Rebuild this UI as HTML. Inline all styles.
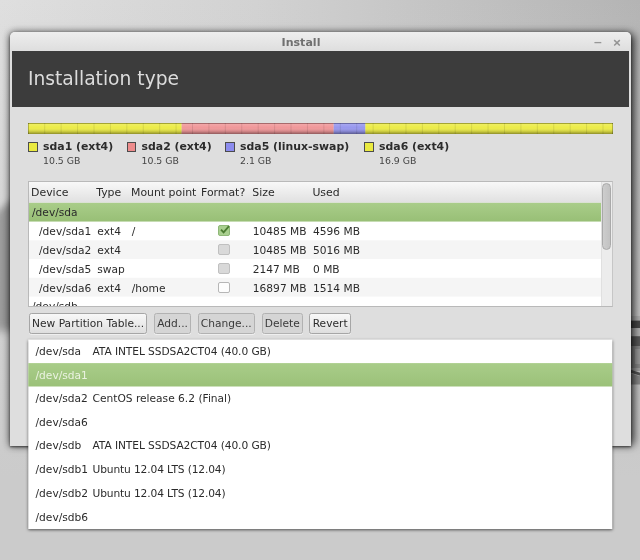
<!DOCTYPE html>
<html>
<head>
<meta charset="utf-8">
<title>Install</title>
<style>
html,body{margin:0;padding:0;}
body{width:640px;height:560px;overflow:hidden;position:relative;
  font-family:"DejaVu Sans","Liberation Sans",sans-serif;font-size:10.65px;color:#3a3a3a;
  background:linear-gradient(to bottom,rgba(203,203,203,0) 0%,rgba(203,203,203,.6) 45%,rgba(203,203,203,1) 85%),linear-gradient(to right,#dfdfdf 0%,#d2d2d2 40%,#b4b4b4 100%);}
.abs{position:absolute;}
#deco{position:absolute;left:0;top:0;width:640px;height:560px;}
#win{filter:blur(.4px);will-change:transform;position:absolute;left:10px;top:32px;width:621px;height:414px;background:#dedede;
  border-radius:5px 5px 0 0;box-shadow:0 1px 2.5px rgba(0,0,0,.55),0 0 6px 1px rgba(0,0,0,.33);}
#wsh{position:absolute;left:12px;top:38px;width:618px;height:403px;box-shadow:1.5px 0 9px 3px rgba(0,0,0,.62);}
#titlebar{position:absolute;left:0;top:0;width:100%;height:19px;border-radius:5px 5px 0 0;
  background:linear-gradient(#eeeeee,#e6e6e6 50%,#dedede);}
#title{position:absolute;left:0;width:582px;top:4px;text-align:center;font-weight:bold;font-size:11.05px;color:#707070;line-height:13px;}
#hdr{position:absolute;left:2px;top:19px;width:617px;height:55.5px;background:#3c3c3c;}
#hdr span{position:absolute;left:15.9px;top:16px;font-size:18.7px;line-height:24px;color:#dcdcdc;white-space:nowrap;}
#bar{position:absolute;left:18px;top:91px;width:585px;height:11px;}
.leg{position:absolute;top:110px;white-space:nowrap;}
.leg i{position:absolute;left:0;top:0;width:7.5px;height:7.5px;border:1px solid #4c4c4c;}
.leg b{position:absolute;left:15px;top:-2px;font-size:10.9px;line-height:14px;color:#2c2c2c;}
.leg s{position:absolute;left:15px;top:12.5px;font-size:9.35px;line-height:12px;color:#444;text-decoration:none;}
#tbl{position:absolute;left:18px;top:149px;width:585px;height:126px;background:#fff;border:1px solid #b9b9b9;border-right-color:#c6c6c6;box-sizing:border-box;overflow:hidden;}
#tbl .h{position:absolute;left:0;top:1px;width:573px;height:20.5px;}
#tbl .row{position:absolute;left:0;width:573px;height:18.75px;}
#tblbg{position:absolute;left:0;top:0;width:572.3px;height:123px;}
#tbl span{position:absolute;top:0;line-height:19px;white-space:nowrap;color:#2b2b2b;}
#tbl .h span{line-height:20px;font-size:10.9px;}
.cb{position:absolute;left:188.6px;top:3px;width:10px;height:8.6px;border:1px solid #b4b4b4;border-radius:2px;box-sizing:content-box;}
#sb{position:absolute;left:572.3px;top:0;width:11.7px;height:124px;background:#ececec;border-left:1px solid #e0e0e0;box-sizing:border-box;}
#sb i{position:absolute;left:0.2px;top:1px;width:6.6px;height:64.5px;border-radius:5px;background:linear-gradient(to right,#cdcdcd,#c2c2c2);border:1px solid #a9a9a9;}
.btn{position:absolute;top:281px;height:20.5px;box-sizing:border-box;border:1px solid #a6a6a6;border-radius:2.5px;
  background:linear-gradient(#f8f8f8,#ececec 50%,#dedede);text-align:center;line-height:20px;color:#2b2b2b;white-space:nowrap;box-shadow:0 1px 0 rgba(255,255,255,.5);}
.btn.d{background:#d5d5d5;border-color:#b2b2b2;color:#3a3a3a;}
#dd{filter:blur(.4px);will-change:transform;position:absolute;left:28px;top:339px;width:585px;height:190px;}
#ddbg{position:absolute;left:-6px;top:-6px;width:597px;height:202px;}
#dd div{position:absolute;left:0;width:100%;height:24px;}
#dd span{position:absolute;top:0;line-height:24px;white-space:nowrap;color:#2b2b2b;}
</style>
</head>
<body>
<svg id="deco" viewBox="0 0 640 560">
  <defs>
    <filter id="bl" x="-50%" y="-20%" width="200%" height="140%"><feGaussianBlur stdDeviation="1.5 4"/></filter>
    <filter id="bl2" x="-20%" y="-5%" width="140%" height="110%"><feGaussianBlur stdDeviation="0.6"/></filter>
    <linearGradient id="lg1" x1="0" x2="1" y1="0" y2="0"><stop offset="0" stop-color="#8c8c8c"/><stop offset="1" stop-color="#6c6c6c"/></linearGradient>
  </defs>
  <path d="M-4 212 L12 200 L12 331 L-4 331Z" fill="url(#lg1)" opacity=".68" filter="url(#bl)"/>
  <g filter="url(#bl2)">
  <rect x="630" y="316" width="11" height="4.6" fill="#b2b2b2"/>
  <rect x="630" y="320.6" width="11" height="7.6" fill="#484848"/>
  <rect x="630" y="328.2" width="11" height="8" fill="#b4b4b4"/>
  <rect x="630" y="336.2" width="11" height="10" fill="#5a5a5a"/>
  <rect x="630" y="346" width="11" height="22" fill="#8a8a8a"/>
  <rect x="635" y="349" width="6" height="15" fill="#9c9c9c"/>
  <rect x="630" y="368" width="11" height="3" fill="#a4a4a4"/>
  <path d="M630 369.5l11 3.5v3l-11 -3.5z" fill="#585858"/>
  <path d="M630 373l11 3.5v8h-11z" fill="#8c8c8c"/>
  </g>
</svg>
<div id="wsh"></div>
<div id="win">
  <div id="titlebar"><div id="title">Install</div>
    <svg class="abs" style="left:580px;top:4px" width="36" height="12" viewBox="0 0 36 12">
      <path d="M4.4 6.6h6.9" stroke="#979797" stroke-width="1.3" fill="none"/>
      <path d="M24.2 4.1l5.6 5.4M29.8 4.1l-5.6 5.4" stroke="#949494" stroke-width="1.5" fill="none"/>
    </svg>
  </div>
  <div id="hdr"><span>Installation type</span></div>
  <svg id="bar" viewBox="0 0 585 11" preserveAspectRatio="none">
    <defs><linearGradient id="sh" x1="0" x2="0" y1="0" y2="1">
      <stop offset="0" stop-color="#000" stop-opacity=".3"/><stop offset=".09" stop-color="#000" stop-opacity=".3"/><stop offset=".1" stop-color="#fff" stop-opacity=".14"/>
      <stop offset=".4" stop-color="#fff" stop-opacity="0"/><stop offset=".8" stop-color="#000" stop-opacity=".17"/><stop offset="1" stop-color="#000" stop-opacity=".4"/></linearGradient></defs>
    <rect x="0" y="0" width="153.7" height="11" fill="#ecec48"/>
    <rect x="153.7" y="0" width="152" height="11" fill="#f0989a"/>
    <rect x="305.7" y="0" width="31.7" height="11" fill="#9898ee"/>
    <rect x="337.4" y="0" width="247.6" height="11" fill="#ecec48"/>
    <rect x="16.22" y="0" width="1" height="11" fill="#000" fill-opacity=".1"/><rect x="32.64" y="0" width="1" height="11" fill="#000" fill-opacity=".1"/><rect x="49.06" y="0" width="1" height="11" fill="#000" fill-opacity=".1"/><rect x="65.48" y="0" width="1" height="11" fill="#000" fill-opacity=".1"/><rect x="81.90" y="0" width="1" height="11" fill="#000" fill-opacity=".1"/><rect x="98.32" y="0" width="1" height="11" fill="#000" fill-opacity=".1"/><rect x="114.74" y="0" width="1" height="11" fill="#000" fill-opacity=".1"/><rect x="131.16" y="0" width="1" height="11" fill="#000" fill-opacity=".1"/><rect x="147.58" y="0" width="1" height="11" fill="#000" fill-opacity=".1"/><rect x="164.00" y="0" width="1" height="11" fill="#000" fill-opacity=".1"/><rect x="180.42" y="0" width="1" height="11" fill="#000" fill-opacity=".1"/><rect x="196.84" y="0" width="1" height="11" fill="#000" fill-opacity=".1"/><rect x="213.26" y="0" width="1" height="11" fill="#000" fill-opacity=".1"/><rect x="229.68" y="0" width="1" height="11" fill="#000" fill-opacity=".1"/><rect x="246.10" y="0" width="1" height="11" fill="#000" fill-opacity=".1"/><rect x="262.52" y="0" width="1" height="11" fill="#000" fill-opacity=".1"/><rect x="278.94" y="0" width="1" height="11" fill="#000" fill-opacity=".1"/><rect x="295.36" y="0" width="1" height="11" fill="#000" fill-opacity=".1"/><rect x="311.78" y="0" width="1" height="11" fill="#000" fill-opacity=".1"/><rect x="328.20" y="0" width="1" height="11" fill="#000" fill-opacity=".1"/><rect x="344.62" y="0" width="1" height="11" fill="#000" fill-opacity=".1"/><rect x="361.04" y="0" width="1" height="11" fill="#000" fill-opacity=".1"/><rect x="377.46" y="0" width="1" height="11" fill="#000" fill-opacity=".1"/><rect x="393.88" y="0" width="1" height="11" fill="#000" fill-opacity=".1"/><rect x="410.30" y="0" width="1" height="11" fill="#000" fill-opacity=".1"/><rect x="426.72" y="0" width="1" height="11" fill="#000" fill-opacity=".1"/><rect x="443.14" y="0" width="1" height="11" fill="#000" fill-opacity=".1"/><rect x="459.56" y="0" width="1" height="11" fill="#000" fill-opacity=".1"/><rect x="475.98" y="0" width="1" height="11" fill="#000" fill-opacity=".1"/><rect x="492.40" y="0" width="1" height="11" fill="#000" fill-opacity=".1"/><rect x="508.82" y="0" width="1" height="11" fill="#000" fill-opacity=".1"/><rect x="525.24" y="0" width="1" height="11" fill="#000" fill-opacity=".1"/><rect x="541.66" y="0" width="1" height="11" fill="#000" fill-opacity=".1"/><rect x="558.08" y="0" width="1" height="11" fill="#000" fill-opacity=".1"/><rect x="574.50" y="0" width="1" height="11" fill="#000" fill-opacity=".1"/>
    <rect x="0" y="0" width="585" height="11" fill="url(#sh)"/>
    <rect x="0" y="0" width="1" height="11" fill="#000" fill-opacity=".25"/><rect x="584" y="0" width="1" height="11" fill="#000" fill-opacity=".25"/>
  </svg>
  <div class="leg" style="left:18px"><i style="background:#eaea40"></i><b>sda1 (ext4)</b><s>10.5 GB</s></div>
  <div class="leg" style="left:116.5px"><i style="background:#ee8c8c"></i><b>sda2 (ext4)</b><s>10.5 GB</s></div>
  <div class="leg" style="left:215px"><i style="background:#8c8cee"></i><b>sda5 (linux-swap)</b><s>2.1 GB</s></div>
  <div class="leg" style="left:354px"><i style="background:#eaea40"></i><b>sda6 (ext4)</b><s>16.9 GB</s></div>
  <div id="tbl">
    <svg id="tblbg" viewBox="0 0 573 123" preserveAspectRatio="none">
      <defs><linearGradient id="hg" x1="0" x2="0" y1="0" y2="1"><stop offset="0" stop-color="#f8f8f8"/><stop offset=".5" stop-color="#ececec"/><stop offset="1" stop-color="#e0e0e0"/></linearGradient>
      <linearGradient id="gg" x1="0" x2="0" y1="0" y2="1"><stop offset="0" stop-color="#a9cd89"/><stop offset="1" stop-color="#98bf76"/></linearGradient></defs>
      <rect x="0" y="0" width="573" height="20.8" fill="url(#hg)"/>
      <rect x="0" y="20.8" width="573" height="18.75" fill="url(#gg)"/>
      <rect x="0" y="58.3" width="573" height="18.75" fill="#f5f5f5"/>
      <rect x="0" y="95.8" width="573" height="18.75" fill="#f5f5f5"/>
    </svg>
    <div class="h"><span style="left:2px;font-size:10.95px">Device</span><span style="left:67.2px">Type</span><span style="left:102px">Mount point</span><span style="left:172px">Format?</span><span style="left:223.3px">Size</span><span style="left:283.4px">Used</span></div>
    <div class="row" style="top:21px"><span style="left:3px">/dev/sda</span></div>
    <div class="row" style="top:40px"><span style="left:10px">/dev/sda1</span><span style="left:68.3px">ext4</span><span style="left:102.7px">/</span><div class="cb" style="background:#a9cf8f;border-color:#8fb878"><svg class="abs" style="left:-1px;top:-2px" width="13" height="12" viewBox="0 0 13 12"><path d="M3 5.6l2.6 2.8L11 2.2" stroke="#4c7c32" stroke-width="1.8" fill="none"/></svg></div><span style="left:223.8px">10485 MB</span><span style="left:284px">4596 MB</span></div>
    <div class="row" style="top:59px"><span style="left:10px">/dev/sda2</span><span style="left:68.3px">ext4</span><div class="cb" style="background:#d9d9d9;border-color:#c0c0c0"></div><span style="left:223.8px">10485 MB</span><span style="left:284px">5016 MB</span></div>
    <div class="row" style="top:78px"><span style="left:10px">/dev/sda5</span><span style="left:68.3px">swap</span><div class="cb" style="background:#d9d9d9;border-color:#c0c0c0"></div><span style="left:223.8px">2147 MB</span><span style="left:284px">0 MB</span></div>
    <div class="row" style="top:97px"><span style="left:10px">/dev/sda6</span><span style="left:68.3px">ext4</span><span style="left:102.7px">/home</span><div class="cb" style="background:#fdfdfd;border-color:#b6b6b6"></div><span style="left:223.8px">16897 MB</span><span style="left:284px">1514 MB</span></div>
    <div class="row" style="top:115px"><span style="left:3px">/dev/sdb</span></div>
    <div id="sb"><i></i></div>
  </div>
  <div class="btn" style="left:18.7px;width:118.8px">New Partition Table...</div>
  <div class="btn d" style="left:144.2px;width:36.8px">Add...</div>
  <div class="btn d" style="left:188px;width:56.5px">Change...</div>
  <div class="btn d" style="left:251.7px;width:41.3px">Delete</div>
  <div class="btn" style="left:299.3px;width:41.7px">Revert</div>
</div>
<div id="dd">
  <svg id="ddbg" viewBox="-6 -6 597 202">
    <defs><filter id="dsh" x="-5%" y="-5%" width="110%" height="115%"><feGaussianBlur stdDeviation="1.7"/></filter>
    <linearGradient id="gg2" x1="0" x2="0" y1="0" y2="1"><stop offset="0" stop-color="#a9cd89"/><stop offset="1" stop-color="#9bc179"/></linearGradient></defs>
    <rect x="0.3" y="1.6" width="584" height="189.4" fill="#000" fill-opacity=".6" filter="url(#dsh)"/>
    <rect x="0.3" y="0.5" width="584" height="189.5" fill="#fff"/>
    <rect x="0.3" y="24.1" width="584" height="23.4" fill="url(#gg2)"/>
  </svg>
  <div style="top:1px"><span style="left:7.5px">/dev/sda</span><span style="left:64.5px;letter-spacing:-.085px">ATA INTEL SSDSA2CT04 (40.0 GB)</span></div>
  <div style="top:25px"><span style="left:7.5px;color:#eaf2e0">/dev/sda1</span></div>
  <div style="top:48px"><span style="left:7.5px">/dev/sda2</span><span style="left:64.5px">CentOS release 6.2 (Final)</span></div>
  <div style="top:72px"><span style="left:7.5px">/dev/sda6</span></div>
  <div style="top:95px"><span style="left:7.5px">/dev/sdb</span><span style="left:64.5px;letter-spacing:-.085px">ATA INTEL SSDSA2CT04 (40.0 GB)</span></div>
  <div style="top:119px"><span style="left:7.5px">/dev/sdb1</span><span style="left:64.5px;letter-spacing:-.125px">Ubuntu 12.04 LTS (12.04)</span></div>
  <div style="top:143px"><span style="left:7.5px">/dev/sdb2</span><span style="left:64.5px;letter-spacing:-.125px">Ubuntu 12.04 LTS (12.04)</span></div>
  <div style="top:167px"><span style="left:7.5px">/dev/sdb6</span></div>
</div>
</body>
</html>
